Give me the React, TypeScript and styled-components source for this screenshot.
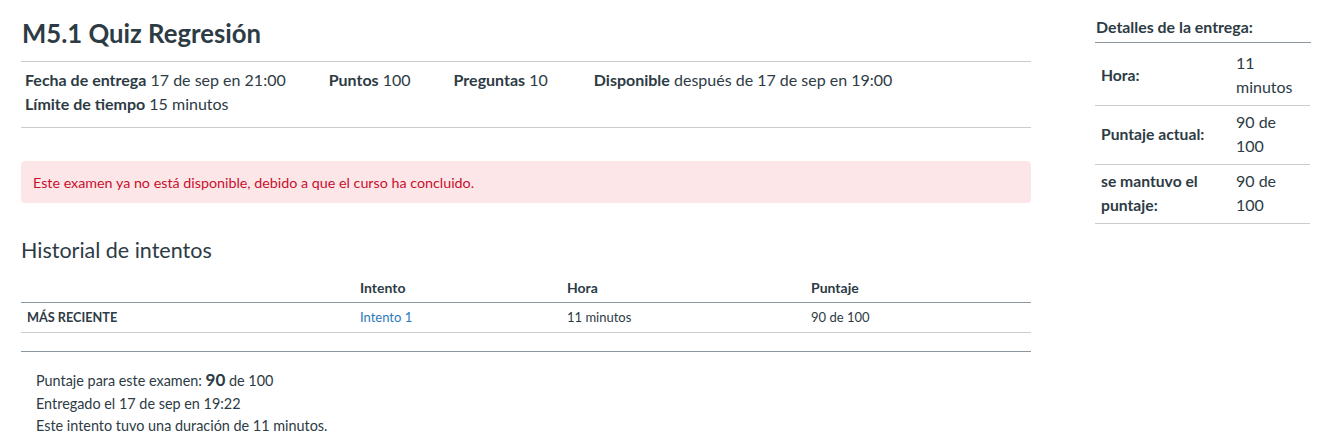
import React from 'react';
import styled, { createGlobalStyle } from 'styled-components';

const colors = {
  text: '#2d3b45',
  border: '#c7cdd1',
  borderDark: '#8b969e',
  link: '#2b7abc',
  alertBg: '#fde6e8',
  alertText: '#c8102e',
};

const GlobalStyle = createGlobalStyle`
  html, body {
    margin: 0;
    padding: 0;
    background: #ffffff;
  }
  body {
    font-family: Lato, 'Liberation Sans', sans-serif;
    color: ${colors.text};
    -webkit-font-smoothing: antialiased;
  }
`;

interface MetaItem {
  label: string;
  value: string;
}

interface DetailRow {
  label: string;
  value: string;
}

const meta: MetaItem[] = [
  { label: 'Fecha de entrega', value: '17 de sep en 21:00' },
  { label: 'Puntos', value: '100' },
  { label: 'Preguntas', value: '10' },
  { label: 'Disponible', value: 'después de 17 de sep en 19:00' },
  { label: 'Límite de tiempo', value: '15 minutos' },
];

const details: DetailRow[] = [
  { label: 'Hora:', value: '11 minutos' },
  { label: 'Puntaje actual:', value: '90 de 100' },
  { label: 'se mantuvo el puntaje:', value: '90 de 100' },
];

export default function App() {
  return (
    <>
      <GlobalStyle />
      <Page>
        <Main>
          <Title>M5.1 Quiz Regresión</Title>
          <MetaList>
            {meta.map((m) => (
              <MetaEntry key={m.label}>
                <MetaLabel>{m.label}</MetaLabel> {m.value}
              </MetaEntry>
            ))}
          </MetaList>

          <Alert>Este examen ya no está disponible, debido a que el curso ha concluido.</Alert>

          <SectionTitle>Historial de intentos</SectionTitle>
          <AttemptsTable>
            <HeadCell />
            <HeadCell>Intento</HeadCell>
            <HeadCell>Hora</HeadCell>
            <HeadCell>Puntaje</HeadCell>
            <BodyCell $strong>MÁS RECIENTE</BodyCell>
            <BodyCell>
              <AttemptLink href="#">Intento 1</AttemptLink>
            </BodyCell>
            <BodyCell>11 minutos</BodyCell>
            <BodyCell>90 de 100</BodyCell>
          </AttemptsTable>

          <Summary>
            <SummaryLine>
              Puntaje para este examen: <Score>90</Score> de 100
            </SummaryLine>
            <SummaryLine>Entregado el 17 de sep en 19:22</SummaryLine>
            <SummaryLine>Este intento tuvo una duración de 11 minutos.</SummaryLine>
          </Summary>
        </Main>

        <Aside>
          <AsideTitle>Detalles de la entrega:</AsideTitle>
          <DetailsGrid>
            {details.map((d) => (
              <React.Fragment key={d.label}>
                <DetailLabel>{d.label}</DetailLabel>
                <DetailValue>{d.value}</DetailValue>
              </React.Fragment>
            ))}
          </DetailsGrid>
        </Aside>
      </Page>
    </>
  );
}

const Page = styled.div`
  display: flex;
  align-items: flex-start;
  gap: 64px;
  padding: 0 10px 0 21px;
`;

const Main = styled.main`
  width: 1010px;
  flex: none;
`;

const Title = styled.h1`
  margin: 15px 0 10px;
  font-size: 25.7px;
  line-height: 36px;
  font-weight: 700;
  padding-left: 1px;
`;

const MetaList = styled.div`
  display: flex;
  flex-wrap: wrap;
  border-top: 1px solid ${colors.border};
  border-bottom: 1px solid ${colors.border};
  padding: 6px 0 11px 4px;
  font-size: 16px;
  line-height: 24px;
`;

const MetaEntry = styled.div`
  margin-right: 43px;
  white-space: nowrap;

  &:nth-child(3) {
    margin-right: 46px;
  }
`;

const MetaLabel = styled.span`
  font-weight: 700;
`;

const Alert = styled.div`
  margin-top: 33px;
  background: ${colors.alertBg};
  color: ${colors.alertText};
  border-radius: 4px;
  padding: 0 12px;
  height: 42px;
  display: flex;
  align-items: center;
  font-size: 14.3px;
`;

const SectionTitle = styled.h2`
  margin: 32px 0 8px;
  font-size: 21.5px;
  line-height: 30px;
  font-weight: 400;
`;

const AttemptsTable = styled.div`
  display: grid;
  grid-template-columns: 333px 207px 244px 1fr;
  border-bottom: 1px solid ${colors.border};
`;

const HeadCell = styled.div`
  padding: 5px 6px 4px;
  font-size: 14px;
  line-height: 20px;
  font-weight: 700;
  border-bottom: 1px solid ${colors.borderDark};
`;

const BodyCell = styled.div<{ $strong?: boolean }>`
  padding: 5px 6px 6px;
  font-size: ${(p) => (p.$strong ? '12.7px' : '13px')};
  line-height: 18px;
  font-weight: ${(p) => (p.$strong ? 700 : 400)};
`;

const AttemptLink = styled.a`
  color: ${colors.link};
  text-decoration: none;
`;

const Summary = styled.div`
  margin-top: 18px;
  border-top: 1px solid ${colors.borderDark};
  padding: 17px 15px 0;
  font-size: 14.4px;
  line-height: 22.5px;
`;

const SummaryLine = styled.div``;

const Score = styled.span`
  font-size: 17px;
  font-weight: 700;
`;

const Aside = styled.aside`
  width: 216px;
  flex: none;
  padding-top: 16px;
`;

const AsideTitle = styled.h3`
  margin: 0;
  padding: 0 0 4px 1px;
  font-size: 15.9px;
  line-height: 22px;
  font-weight: 700;
  border-bottom: 1px solid ${colors.borderDark};
`;

const DetailsGrid = styled.div`
  display: grid;
  grid-template-columns: 135px 1fr;
  padding-top: 4px;
`;

const DetailLabel = styled.div`
  display: flex;
  align-items: center;
  padding: 4px 6px 6px;
  font-size: 15.7px;
  line-height: 24px;
  font-weight: 700;
  border-bottom: 1px solid ${colors.border};
`;

const DetailValue = styled.div`
  padding: 4px 14px 6px 6px;
  font-size: 16px;
  line-height: 24px;
  width: 60px;
  border-bottom: 1px solid ${colors.border};
`;
